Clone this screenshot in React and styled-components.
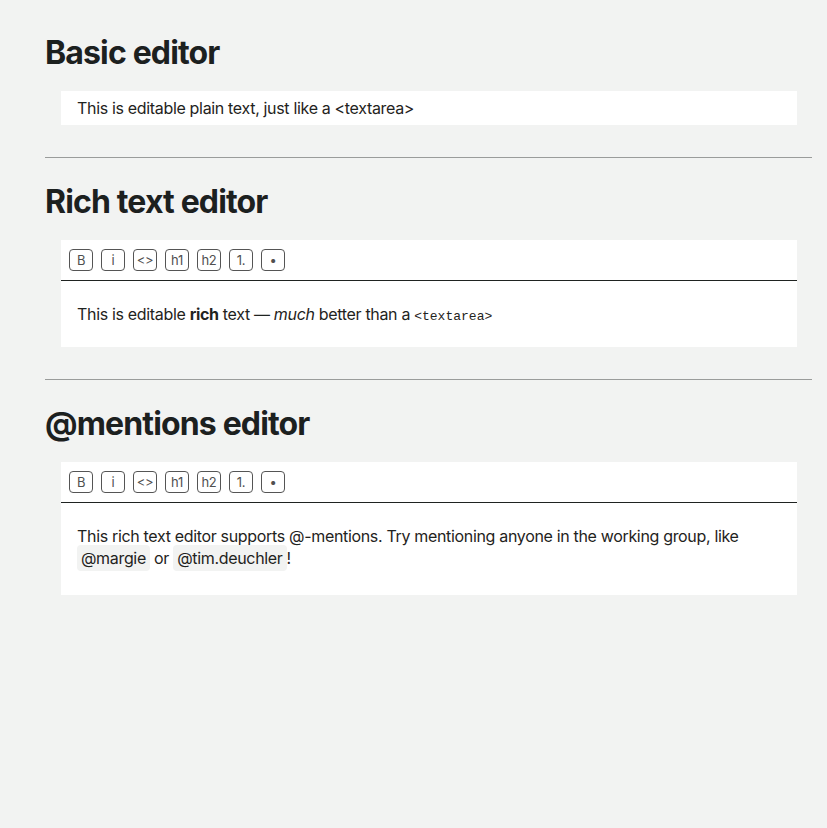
import React from 'react'
import styled, { createGlobalStyle } from 'styled-components'

const GlobalStyle = createGlobalStyle`
  html, body {
    margin: 0;
    padding: 0;
    background: #f2f3f2;
  }
  body {
    font-family: Inter, "Noto Sans", sans-serif;
    color: #1f2321;
  }
`

const Page = styled.main`
  padding: 30px 15px 40px 45px;
`

const Section = styled.section`
  display: flex;
  flex-direction: column;
`

const Title = styled.h2`
  margin: 0;
  font-size: 32px;
  line-height: 46px;
  font-weight: 700;
  letter-spacing: -0.85px;
  color: #1c201f;
`

const Rule = styled.hr`
  border: 0;
  border-top: 1px solid #9a9c9b;
  margin: 32px 0 21px;
`

const Editor = styled.div`
  margin: 15px 15px 0 16px;
  background: #fff;
`

const Toolbar = styled.div`
  display: flex;
  align-items: center;
  gap: 8px;
  height: 41px;
  padding: 0 8px;
  border-bottom: 1px solid #1f2321;
  box-sizing: border-box;
`

const ToolButton = styled.button`
  width: 24px;
  height: 22px;
  padding: 0;
  border: 1px solid #555;
  border-radius: 4px;
  background: #fff;
  font-family: Inter, "Noto Sans", sans-serif;
  font-size: 13px;
  letter-spacing: -0.3px;
  color: #505050;
  display: flex;
  align-items: center;
  justify-content: center;
`

const Content = styled.div`
  padding: ${p => p.$pad || '6px 16px'};
  font-size: 16px;
  line-height: 22px;
  letter-spacing: -0.33px;
  color: #1f2321;
`

const Code = styled.code`
  font-family: "Liberation Mono", monospace;
  font-size: 13px;
  line-height: 1;
  letter-spacing: 0;
`

const Mention = styled.span`
  background: #f2f3f2;
  border-radius: 4px;
  padding: 3px 4px;
`

const tools = ['B', 'i', '<>', 'h1', 'h2', '1.', '•']

const Tools = () => (
  <Toolbar>
    {tools.map(t => <ToolButton key={t}>{t}</ToolButton>)}
  </Toolbar>
)

export default function App() {
  return (
    <>
      <GlobalStyle />
      <Page>
        <Section>
          <Title>Basic editor</Title>
          <Editor>
            <Content>This is editable plain text, just like a &lt;textarea&gt;</Content>
          </Editor>
        </Section>
        <Rule />
        <Section>
          <Title>Rich text editor</Title>
          <Editor>
            <Tools />
            <Content $pad="22px 16px 22px">
              This is editable <b>rich</b> text — <i>much</i> better than a <Code>&lt;textarea&gt;</Code>
            </Content>
          </Editor>
        </Section>
        <Rule />
        <Section>
          <Title>@mentions editor</Title>
          <Editor>
            <Tools />
            <Content $pad="22px 16px 26px">
              This rich text editor supports @-mentions. Try mentioning anyone in the working group, like{' '}
              <Mention>@margie</Mention> or <Mention>@tim.deuchler</Mention>!
            </Content>
          </Editor>
        </Section>
      </Page>
    </>
  )
}
